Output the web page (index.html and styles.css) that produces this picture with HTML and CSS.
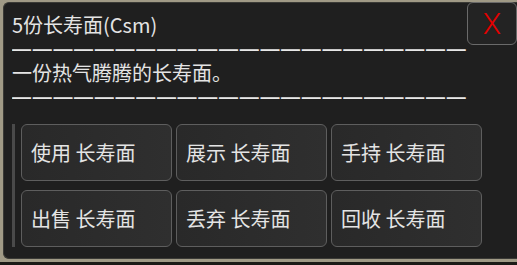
FILE: index.html
```html
<!DOCTYPE html>
<html lang="zh-CN">
<head>
    <meta charset="UTF-8">
    <title>5份长寿面(Csm)</title>
    <link rel="stylesheet" href="styles.css">
</head>
<body>
    <div class="frame">
        <div class="panel">
            <div class="item-title">5份长寿面(Csm)</div>
            <div class="divider">——————————————————————</div>
            <div class="item-desc">一份热气腾腾的长寿面。</div>
            <div class="divider">——————————————————————</div>

            <div class="actions">
                <div class="actions-bar"></div>
                <div class="actions-grid">
                    <button class="action-btn">使用 长寿面</button>
                    <button class="action-btn">展示 长寿面</button>
                    <button class="action-btn">手持 长寿面</button>
                    <button class="action-btn">出售 长寿面</button>
                    <button class="action-btn">丢弃 长寿面</button>
                    <button class="action-btn">回收 长寿面</button>
                </div>
            </div>

            <button class="close-btn" aria-label="关闭">X</button>
        </div>
    </div>
</body>
</html>
```

FILE: styles.css
```css
:root {
    --beige: #a09a86;
    --panel-bg: #1f1f1f;
    --btn-bg: #2b2b2b;
    --btn-border: #5e5e5e;
    --text-color: #e4e4e4;
    --danger: #e30000;
}

* {
    margin: 0;
    padding: 0;
    box-sizing: border-box;
}

body {
    width: 517px;
    height: 265px;
    overflow: hidden;
    background-color: #1c1b17;
    font-family: 'Noto Sans CJK SC', 'Noto Sans', sans-serif;
    color: var(--text-color);
}

.frame {
    background-color: var(--beige);
    padding: 2px 0 3px 3px;
}

.panel {
    position: relative;
    height: 257px;
    background-color: var(--panel-bg);
    border: 1px solid #3a3a36;
    border-right: none;
    border-radius: 6px 0 0 6px;
    padding: 10px 0 0 8px;
}

.item-title,
.item-desc {
    font-size: 20px;
    line-height: 24px;
    white-space: nowrap;
}

.divider {
    height: 24px;
    font-family: 'Liberation Sans', sans-serif;
    font-size: 19px;
    line-height: 24px;
    letter-spacing: 1.7px;
    font-weight: bold;
    color: #e8e8e8;
    white-space: nowrap;
    overflow: hidden;
}

.actions {
    display: flex;
    gap: 6px;
    margin-top: 15px;
}

.actions-bar {
    width: 3px;
    background-color: #4a4a4a;
}

.actions-grid {
    display: grid;
    grid-template-columns: repeat(3, 151px);
    grid-auto-rows: 57px;
    column-gap: 4px;
    row-gap: 9px;
}

.action-btn {
    background: linear-gradient(to right, #292929, #2f2f2f);
    border: 1.5px solid var(--btn-border);
    border-radius: 6px;
    color: var(--text-color);
    font-family: inherit;
    font-size: 20px;
    text-align: left;
    padding-left: 9px;
    cursor: pointer;
}

.close-btn {
    position: absolute;
    top: -1px;
    right: 0;
    width: 50px;
    height: 43px;
    background-color: #232323;
    border: 1.5px solid #6a6a6a;
    border-radius: 6px;
    color: var(--danger);
    font-family: 'Roboto', sans-serif;
    font-weight: 300;
    font-size: 30px;
    line-height: 1;
    cursor: pointer;
}
```
